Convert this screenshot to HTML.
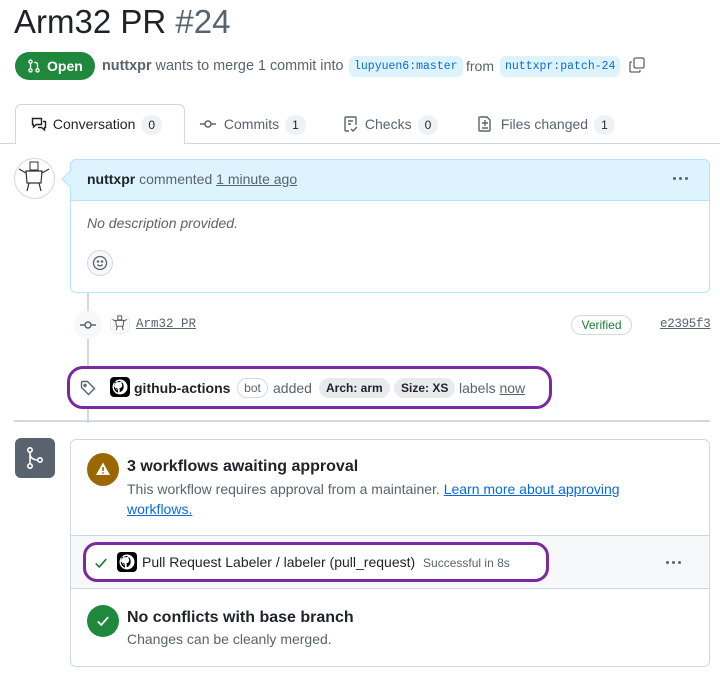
<!DOCTYPE html>
<html><head><meta charset="utf-8"><style>
*{box-sizing:border-box;margin:0;padding:0}
body{width:720px;height:680px;background:#fff;font-family:"Liberation Sans",sans-serif;color:#1f2328;position:relative;overflow:hidden;font-size:14px}
.a{position:absolute;white-space:nowrap}
.mono{font-family:"Liberation Mono",monospace}
.chip{background:#ddf4ff;color:#0969da;border-radius:6px;font-size:11.5px;padding:3px 5px;line-height:15px}
.cnt{display:inline-block;background:#eff2f5;border-radius:10px;font-size:12px;padding:2px 7px;margin-left:6px;line-height:16px}
.pill{background:#e8eaed;border-radius:10px;font-size:12px;font-weight:bold;padding:2px 7px;line-height:16px}
.gray{color:#59636e}
.dots{position:absolute;display:flex;gap:3px}
.dots i{width:3px;height:3px;border-radius:50%;background:#59636e;display:block}
</style></head><body>
<div class="a" style="left:14px;top:2px;font-size:33px;line-height:40px">Arm32 PR <span class="gray">#24</span></div>
<div class="a" style="left:15px;top:52px;width:80px;height:28px;background:#1f883d;border-radius:14px;color:#fff;font-weight:bold;font-size:14px;line-height:28px;padding-left:32px">Open
<svg style="position:absolute;left:12px;top:7px" width="14" height="14" viewBox="0 0 16 16" fill="none" stroke="#fff" stroke-width="1.5"><circle cx="4" cy="3" r="1.8"/><circle cx="4" cy="13" r="1.8"/><circle cx="12" cy="13" r="1.8"/><path d="M4 5v6M12 11V6a2 2 0 0 0-2-2H8"/></svg></div>
<div class="a gray" style="left:102px;top:57px;line-height:18px;font-size:14.4px"><b style="color:#59636e">nuttxpr</b> wants to merge 1 commit into</div>
<div class="a chip mono" style="left:349px;top:56px">lupyuen6:master</div>
<div class="a gray" style="left:466px;top:57px;line-height:18px">from</div>
<div class="a chip mono" style="left:500px;top:56px">nuttxpr:patch-24</div>
<svg class="a" style="left:629px;top:57px" width="16" height="16" viewBox="0 0 16 16" fill="none" stroke="#59636e" stroke-width="1.3"><rect x="5" y="1" width="10" height="10" rx="1.5"/><path d="M3 5H2a1 1 0 0 0-1 1v8a1 1 0 0 0 1 1h8a1 1 0 0 0 1-1v-1"/></svg>

<div class="a" style="left:0;top:143px;width:720px;border-top:1px solid #d1d9e0"></div>
<div class="a" style="left:15px;top:104px;width:170px;height:40px;border:1px solid #d1d9e0;border-bottom:none;border-radius:6px 6px 0 0;background:#fff"></div>
<div class="a" style="left:31px;top:114px;line-height:20px">
<svg style="vertical-align:-3px" width="16" height="16" viewBox="0 0 16 16" fill="none" stroke="#1f2328" stroke-width="1.4"><path d="M1.5 2.5h9v6h-5l-3 2.5v-2.5h-1z"/><path d="M12 5.5h2.5v6h-1V14l-3-2.5H7"/></svg> <span style="margin-left:2px">Conversation</span><span class="cnt">0</span></div>
<div class="a" style="left:200px;top:114px;line-height:20px">
<svg style="vertical-align:-3px" width="16" height="16" viewBox="0 0 16 16" fill="none" stroke="#59636e" stroke-width="1.5"><circle cx="8" cy="8" r="3"/><path d="M0 8h5M11 8h5"/></svg> <span style="margin-left:4px;color:#59636e">Commits</span><span class="cnt">1</span></div>
<div class="a" style="left:343px;top:114px;line-height:20px">
<svg style="vertical-align:-3px" width="16" height="16" viewBox="0 0 16 16" fill="none" stroke="#59636e" stroke-width="1.4"><path d="M6 15H3a1 1 0 0 1-1-1V2a1 1 0 0 1 1-1h9a1 1 0 0 1 1 1v7M5 5h5M5 8h3M8 13l2 2 4-4"/></svg> <span style="margin-left:2px;color:#59636e">Checks</span><span class="cnt">0</span></div>
<div class="a" style="left:477px;top:114px;line-height:20px">
<svg style="vertical-align:-3px" width="16" height="16" viewBox="0 0 16 16" fill="none" stroke="#59636e" stroke-width="1.4"><path d="M3 1h7l3 3v10a1 1 0 0 1-1 1H3a1 1 0 0 1-1-1V2a1 1 0 0 1 1-1zM8 4v6M5 7h6M5 12h6"/></svg> <span style="margin-left:4px;color:#59636e">Files changed</span><span class="cnt">1</span></div>

<svg class="a" style="left:14px;top:158px" width="41" height="41" viewBox="0 0 41 41"><circle cx="20.5" cy="20.5" r="20" fill="#fff" stroke="#d1d9e0"/><rect x="16" y="4" width="8" height="8" fill="none" stroke="#333"/><path d="M12 13h16l-1 12h-14zM12 15l-7-4M28 15l7-4M15 25l-2 8M25 25l2 8" fill="none" stroke="#333" stroke-width="1.2"/></svg>
<div class="a" style="left:87px;top:293px;height:130px;border-left:2px solid #d1d9e0"></div>
<div class="a" style="left:70px;top:159px;width:640px;height:134px;border:1px solid #b6e3ff;border-radius:6px"></div>
<div class="a" style="left:70px;top:159px;width:640px;height:42px;background:#ddf4ff;border:1px solid #b6e3ff;border-radius:6px 6px 0 0"></div>
<div class="a" style="left:64px;top:173px;width:12px;height:12px;background:#ddf4ff;border-left:1px solid #b6e3ff;border-bottom:1px solid #b6e3ff;transform:rotate(45deg)"></div>
<div class="a" style="left:87px;top:170px;line-height:18px"><b>nuttxpr</b> <span class="gray">commented <u>1 minute ago</u></span></div>
<div class="dots" style="left:673px;top:177px"><i></i><i></i><i></i></div>
<div class="a" style="left:87px;top:214px;font-style:italic;line-height:18px;color:#59636e">No description provided.</div>
<div class="a" style="left:87px;top:250px;width:26px;height:26px;border-radius:13px;background:#f6f8fa;border:1px solid #d1d9e0"></div>
<svg class="a" style="left:92px;top:255px" width="16" height="16" viewBox="0 0 16 16" fill="none" stroke="#59636e" stroke-width="1.3"><circle cx="8" cy="8" r="6.5"/><path d="M5.5 9.5a3 3 0 0 0 5 0"/><circle cx="6" cy="6.5" r=".6" fill="#59636e"/><circle cx="10" cy="6.5" r=".6" fill="#59636e"/></svg>

<div class="a" style="left:74px;top:311px;width:28px;height:28px;border-radius:14px;background:#f6f8fa"></div>
<svg class="a" style="left:80px;top:317px" width="16" height="16" viewBox="0 0 16 16" fill="none" stroke="#59636e" stroke-width="1.5"><circle cx="8" cy="8" r="3"/><path d="M0 8h5M11 8h5"/></svg>
<svg class="a" style="left:110px;top:314px" width="20" height="20" viewBox="0 0 41 41"><circle cx="20.5" cy="20.5" r="20" fill="#fff" stroke="#d1d9e0"/><rect x="16" y="4" width="8" height="8" fill="none" stroke="#555" stroke-width="2"/><path d="M12 13h16l-1 12h-14zM12 15l-7-4M28 15l7-4M15 25l-2 8M25 25l2 8" fill="none" stroke="#555" stroke-width="2"/></svg>
<div class="a mono gray" style="left:136px;top:316px;font-size:12.5px;line-height:16px;text-decoration:underline">Arm32 PR</div>
<div class="a" style="left:571px;top:315px;width:61px;height:20px;border:1px solid #d1d9e0;border-radius:10px;color:#1a7f37;font-size:12px;text-align:center;line-height:18px">Verified</div>
<div class="a mono gray" style="left:660px;top:316px;font-size:12.5px;line-height:16px;text-decoration:underline;letter-spacing:-0.3px">e2395f3</div>

<div class="a" style="left:67px;top:366px;width:485px;height:43px;border:3px solid #7a2a9e;border-radius:16px;background:#fff"></div>
<svg class="a" style="left:80px;top:380px" width="16" height="16" viewBox="0 0 16 16" fill="none" stroke="#59636e" stroke-width="1.4"><path d="M1.5 2.5v5l7 7 6-6-7-7h-5a1 1 0 0 0-1 1z"/><circle cx="5" cy="5.5" r="1"/></svg>
<svg class="a" style="left:110px;top:377px" width="20" height="20" viewBox="0 0 20 20"><rect width="20" height="20" rx="4" fill="#000"/><circle cx="10" cy="10" r="7.5" fill="#fff"/><path d="M10 4a6 6 0 0 0-2 11.7v-2.5c-1.5.3-2-1-2-1-.5-1-1-1-1-1 .8-.4 1.3.7 1.3.7.7 1.1 1.7.7 1.7.7 0-1-1-1.3-1-1.3-2-.2-3-1.2-3-3 0-.7.3-1.3.7-1.8 0-.3-.3-1 .1-2 0 0 .7 0 1.8.8a6 6 0 0 1 3 0c1.1-.8 1.8-.8 1.8-.8.4 1 .1 1.7.1 2 .4.5.7 1.1.7 1.8 0 1.8-1 2.8-3 3 .3.3.5.7.5 1.3v2.6A6 6 0 0 0 10 4z" fill="#000"/></svg>
<div class="a" style="left:134px;top:379px;line-height:18px"><b>github-actions</b></div>
<div class="a gray" style="left:237px;top:378px;width:31px;height:20px;border:1px solid #d1d9e0;border-radius:10px;font-size:12px;text-align:center;line-height:18px">bot</div>
<div class="a gray" style="left:273px;top:379px;line-height:18px">added</div>
<div class="a pill" style="left:319px;top:378px">Arch: arm</div>
<div class="a pill" style="left:394px;top:378px">Size: XS</div>
<div class="a gray" style="left:459px;top:379px;line-height:18px">labels <u>now</u></div>

<div class="a" style="left:14px;top:420px;width:696px;border-top:2px solid #d1d9e0"></div>

<div class="a" style="left:15px;top:438px;width:40px;height:40px;background:#59636e;border-radius:6px"></div>
<svg class="a" style="left:25px;top:446px" width="20" height="24" viewBox="0 0 20 24" fill="none" stroke="#fff" stroke-width="1.6"><circle cx="5" cy="4" r="2.2"/><circle cx="5" cy="20" r="2.2"/><circle cx="15" cy="14" r="2.2"/><path d="M5 6.2v11.6M5 8c0 4 4 6 7.8 6"/></svg>
<div class="a" style="left:70px;top:439px;width:640px;height:228px;border:1px solid #d1d9e0;border-radius:6px"></div>
<div class="a" style="left:87px;top:453px;width:32px;height:33px;border-radius:50%;background:#9a6700"></div>
<svg class="a" style="left:95px;top:461px" width="16" height="16" viewBox="0 0 16 16"><path d="M8 1.5L15 14H1z" fill="#fff"/><path d="M8 6v4" stroke="#9a6700" stroke-width="1.6"/><circle cx="8" cy="12" r=".9" fill="#9a6700"/></svg>
<div class="a" style="left:127px;top:457px;font-size:16px;font-weight:bold;line-height:20px">3 workflows awaiting approval</div>
<div class="a gray" style="left:127px;top:480px;line-height:18px">This workflow requires approval from a maintainer. <u style="color:#0969da">Learn more about approving</u></div>
<div class="a" style="left:127px;top:500px;line-height:18px;color:#0969da;text-decoration:underline">workflows.</div>
<div class="a" style="left:71px;top:535px;width:638px;height:54px;background:#f6f8fa;border-top:1px solid #d1d9e0;border-bottom:1px solid #d1d9e0"></div>
<div class="a" style="left:83px;top:542px;width:466px;height:40px;border:3px solid #7a2a9e;border-radius:14px;background:#fff"></div>
<svg class="a" style="left:94px;top:556px" width="14" height="14" viewBox="0 0 16 16" fill="none" stroke="#1a7f37" stroke-width="1.8"><path d="M2 8.5l4 4 8-9"/></svg>
<svg class="a" style="left:117px;top:552px" width="20" height="20" viewBox="0 0 20 20"><rect width="20" height="20" rx="4" fill="#000"/><circle cx="10" cy="10" r="7.5" fill="#fff"/><path d="M10 4a6 6 0 0 0-2 11.7v-2.5c-1.5.3-2-1-2-1-.5-1-1-1-1-1 .8-.4 1.3.7 1.3.7.7 1.1 1.7.7 1.7.7 0-1-1-1.3-1-1.3-2-.2-3-1.2-3-3 0-.7.3-1.3.7-1.8 0-.3-.3-1 .1-2 0 0 .7 0 1.8.8a6 6 0 0 1 3 0c1.1-.8 1.8-.8 1.8-.8.4 1 .1 1.7.1 2 .4.5.7 1.1.7 1.8 0 1.8-1 2.8-3 3 .3.3.5.7.5 1.3v2.6A6 6 0 0 0 10 4z" fill="#000"/></svg>
<div class="a" style="left:142px;top:553px;line-height:18px">Pull Request Labeler / labeler (pull_request) <span class="gray" style="font-size:12px;margin-left:4px">Successful in 8s</span></div>
<div class="dots" style="left:666px;top:561px"><i></i><i></i><i></i></div>
<div class="a" style="left:87px;top:605px;width:32px;height:32px;border-radius:50%;background:#1f883d"></div>
<svg class="a" style="left:96px;top:614px" width="14" height="14" viewBox="0 0 16 16" fill="none" stroke="#fff" stroke-width="2"><path d="M2 8.5l4 4 8-9"/></svg>
<div class="a" style="left:127px;top:608px;font-size:16px;font-weight:bold;line-height:20px">No conflicts with base branch</div>
<div class="a gray" style="left:127px;top:630px;line-height:18px">Changes can be cleanly merged.</div>
</body></html>
